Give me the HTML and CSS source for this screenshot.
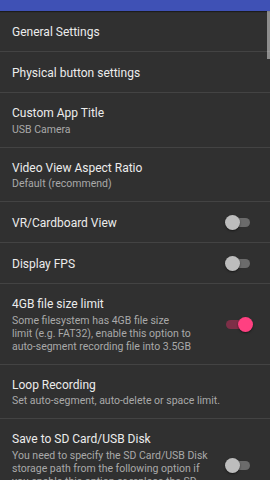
FILE: index.html
```html
<!DOCTYPE html>
<html>
<head>
    <meta charset="UTF-8">
    <title>Settings</title>
    <link rel="stylesheet" href="styles.css">
</head>
<body>

<div class="appbar"></div>
<div class="scrollbar"></div>

<div class="prefs">
    <div class="pref">
        <div class="text"><div class="title">General Settings</div></div>
    </div>
    <div class="pref">
        <div class="text"><div class="title">Physical button settings</div></div>
    </div>
    <div class="pref">
        <div class="text">
            <div class="title">Custom App Title</div>
            <div class="summary">USB Camera</div>
        </div>
    </div>
    <div class="pref">
        <div class="text">
            <div class="title">Video View Aspect Ratio</div>
            <div class="summary">Default (recommend)</div>
        </div>
    </div>
    <div class="pref">
        <div class="text"><div class="title">VR/Cardboard View</div></div>
        <div class="widget"><span class="switch"></span></div>
    </div>
    <div class="pref">
        <div class="text"><div class="title">Display FPS</div></div>
        <div class="widget"><span class="switch"></span></div>
    </div>
    <div class="pref">
        <div class="text">
            <div class="title">4GB file size limit</div>
            <div class="summary">Some filesystem has 4GB file size<br>limit (e.g. FAT32), enable this option to<br>auto-segment recording file into 3.5GB</div>
        </div>
        <div class="widget"><span class="switch on"></span></div>
    </div>
    <div class="pref">
        <div class="text">
            <div class="title">Loop Recording</div>
            <div class="summary">Set auto-segment, auto-delete or space limit.</div>
        </div>
    </div>
    <div class="pref">
        <div class="text">
            <div class="title">Save to SD Card/USB Disk</div>
            <div class="summary">You need to specify the SD Card/USB Disk storage path from the following option if you enable this option or replace the SD card.</div>
        </div>
        <div class="widget"><span class="switch"></span></div>
    </div>
</div>

</body>
</html>
```

FILE: styles.css
```css
body {
    margin: 0;
    background-color: #303030;
    font-family: Roboto, "Noto Sans", sans-serif;
    overflow: hidden;
}
.appbar {
    height: 11px;
    background-color: #3f51b5;
    box-shadow: 0 1px 1px rgba(0, 0, 0, 0.4);
}
.scrollbar {
    position: absolute;
    top: 11px;
    right: 0;
    width: 3px;
    height: 48px;
    background-color: rgba(255, 255, 255, 0.45);
}
.pref {
    display: flex;
    align-items: center;
    min-height: 17px;
    padding: 12px 20px 11px 12px;
    border-bottom: 1px solid #434343;
}
.text {
    flex: 1;
    min-width: 0;
}
.title {
    font-size: 12px;
    line-height: 16px;
    color: #ececec;
}
.summary {
    margin-top: 1.5px;
    font-size: 10.5px;
    line-height: 13px;
    color: #a9a9a9;
}
.widget {
    width: 25px;
    margin-left: 13px;
    display: flex;
    justify-content: flex-end;
}
.switch {
    position: relative;
    display: block;
    width: 24px;
    height: 9px;
    border-radius: 5px;
    background-color: #6b6b6b;
}
.switch::after {
    content: "";
    position: absolute;
    top: -3px;
    left: -1px;
    width: 15px;
    height: 15px;
    border-radius: 50%;
    background-color: #bdbdbd;
    box-shadow: 0 1px 2px rgba(0, 0, 0, 0.5);
}
.switch.on {
    background-color: #7d2f47;
}
.switch.on::after {
    left: auto;
    right: -3px;
    background-color: #ff4081;
}
```
